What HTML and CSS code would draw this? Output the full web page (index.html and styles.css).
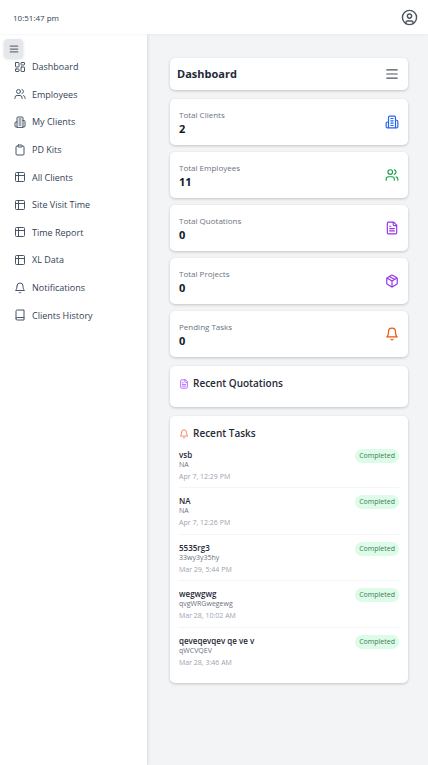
FILE: index.html
```html
<!DOCTYPE html>
<html lang="en">
<head>
<meta charset="utf-8">
<meta name="viewport" content="width=device-width, initial-scale=1">
<title>Dashboard</title>
<link rel="stylesheet" href="styles.css">
</head>
<body>
<svg class="sprite" aria-hidden="true">
  <symbol id="grid" viewBox="0 0 24 24"><rect x="3" y="3" width="7" height="9" rx="1"/><rect x="14" y="3" width="7" height="5" rx="1"/><rect x="14" y="12" width="7" height="9" rx="1"/><rect x="3" y="16" width="7" height="5" rx="1"/></symbol>
  <symbol id="users" viewBox="0 0 24 24"><path d="M16 21v-2a4 4 0 0 0-4-4H6a4 4 0 0 0-4 4v2"/><circle cx="9" cy="7" r="4"/><path d="M22 21v-2a4 4 0 0 0-3-3.87M16 3.13a4 4 0 0 1 0 7.75"/></symbol>
  <symbol id="building" viewBox="0 0 24 24"><path d="M6 22V4a2 2 0 0 1 2-2h8a2 2 0 0 1 2 2v18ZM6 12H4a2 2 0 0 0-2 2v6a2 2 0 0 0 2 2h2M18 9h2a2 2 0 0 1 2 2v9a2 2 0 0 1-2 2h-2M10 6h4M10 10h4M10 14h4M10 18h4"/></symbol>
  <symbol id="clipboard" viewBox="0 0 24 24"><rect x="8" y="2" width="8" height="4" rx="1"/><path d="M16 4h2a2 2 0 0 1 2 2v14a2 2 0 0 1-2 2H6a2 2 0 0 1-2-2V6a2 2 0 0 1 2-2h2"/></symbol>
  <symbol id="table" viewBox="0 0 24 24"><path d="M9 3H5a2 2 0 0 0-2 2v4m6-6h10a2 2 0 0 1 2 2v4M9 3v18m0 0h10a2 2 0 0 0 2-2V9M9 21H5a2 2 0 0 1-2-2V9m0 0h18"/></symbol>
  <symbol id="bell" viewBox="0 0 24 24"><path d="M6 8a6 6 0 0 1 12 0c0 7 3 9 3 9H3s3-2 3-9M10.3 21a1.94 1.94 0 0 0 3.4 0"/></symbol>
  <symbol id="book" viewBox="0 0 24 24"><path d="M4 19.5v-15A2.5 2.5 0 0 1 6.500 2H20v20H6.500a2.500 2.500 0 0 1 0-5H20"/></symbol>
  <symbol id="file" viewBox="0 0 24 24"><path d="M15 2H6a2 2 0 0 0-2 2v16a2 2 0 0 0 2 2h12a2 2 0 0 0 2-2V7ZM14 2v4a2 2 0 0 0 2 2h4M10 9H8M16 13H8M16 17H8"/></symbol>
  <symbol id="box" viewBox="0 0 24 24"><path d="M21 8a2 2 0 0 0-1-1.730l-7-4a2 2 0 0 0-2 0l-7 4A2 2 0 0 0 3 8v8a2 2 0 0 0 1 1.730l7 4a2 2 0 0 0 2 0l7-4A2 2 0 0 0 21 16ZM3.300 7l8.700 5 8.700-5M12 22V12M7.500 4.270l9 5.150"/></symbol>
  <symbol id="menu" viewBox="0 0 24 24"><path d="M3 5h18M3 12h18M3 19h18"/></symbol>
  <symbol id="user" viewBox="0 0 24 24"><circle cx="12" cy="12" r="10"/><circle cx="12" cy="10" r="3"/><path d="M7 20.700V19a2 2 0 0 1 2-2h6a2 2 0 0 1 2 2v1.700"/></symbol>
</svg>

<header class="topbar">
  <time class="clock">10:51:47 pm</time>
  <button class="plain" type="button" aria-label="Account"><svg class="icon icon-profile"><use href="#user"/></svg></button>
</header>

<div class="shell">
  <aside class="sidebar">
    <button class="toggle" type="button" aria-label="Toggle sidebar"><svg class="icon icon-toggle"><use href="#menu"/></svg></button>
    <nav class="nav">
      <a href="#"><svg class="icon"><use href="#grid"/></svg>Dashboard</a>
      <a href="#"><svg class="icon"><use href="#users"/></svg>Employees</a>
      <a href="#"><svg class="icon"><use href="#building"/></svg>My Clients</a>
      <a href="#"><svg class="icon"><use href="#clipboard"/></svg>PD Kits</a>
      <a href="#"><svg class="icon"><use href="#table"/></svg>All Clients</a>
      <a href="#"><svg class="icon"><use href="#table"/></svg>Site Visit Time</a>
      <a href="#"><svg class="icon"><use href="#table"/></svg>Time Report</a>
      <a href="#"><svg class="icon"><use href="#table"/></svg>XL Data</a>
      <a href="#"><svg class="icon"><use href="#bell"/></svg>Notifications</a>
      <a href="#"><svg class="icon"><use href="#book"/></svg>Clients History</a>
    </nav>
  </aside>

  <main class="content">
    <div class="card page-head">
      <h1>Dashboard</h1>
      <button class="plain" type="button" aria-label="Menu"><svg class="icon icon-menu"><use href="#menu"/></svg></button>
    </div>

    <section class="stats">
      <div class="card stat"><div><p class="label">Total Clients</p><p class="value">2</p></div><svg class="icon icon-stat blue"><use href="#building"/></svg></div>
      <div class="card stat"><div><p class="label">Total Employees</p><p class="value">11</p></div><svg class="icon icon-stat green"><use href="#users"/></svg></div>
      <div class="card stat"><div><p class="label">Total Quotations</p><p class="value">0</p></div><svg class="icon icon-stat purple"><use href="#file"/></svg></div>
      <div class="card stat"><div><p class="label">Total Projects</p><p class="value">0</p></div><svg class="icon icon-stat purple"><use href="#box"/></svg></div>
      <div class="card stat"><div><p class="label">Pending Tasks</p><p class="value">0</p></div><svg class="icon icon-stat orange"><use href="#bell"/></svg></div>
    </section>

    <section class="card panel">
      <h2><svg class="icon icon-small purple-soft"><use href="#file"/></svg>Recent Quotations</h2>
      <ul class="quotations"></ul>
    </section>

    <section class="card panel">
      <h2><svg class="icon icon-small orange-soft"><use href="#bell"/></svg>Recent Tasks</h2>
      <ul class="tasks">
        <li><div><h3>vsb</h3><p class="note">NA</p><p class="date">Apr 7, 12:29 PM</p></div><span class="badge">Completed</span></li>
        <li><div><h3>NA</h3><p class="note">NA</p><p class="date">Apr 7, 12:26 PM</p></div><span class="badge">Completed</span></li>
        <li><div><h3>5535rg3</h3><p class="note">33wy3y35hy</p><p class="date">Mar 29, 5:44 PM</p></div><span class="badge">Completed</span></li>
        <li><div><h3>wegwgwg</h3><p class="note">qvgWRGwegewg</p><p class="date">Mar 28, 10:02 AM</p></div><span class="badge">Completed</span></li>
        <li><div><h3>qeveqevqev qe ve v</h3><p class="note">qWCVQEV</p><p class="date">Mar 28, 3:46 AM</p></div><span class="badge">Completed</span></li>
      </ul>
    </section>
  </main>
</div>
</body>
</html>
```
FILE: styles.css
```css
* { box-sizing: border-box; margin: 0; padding: 0; }

body {
  min-height: 100vh;
  display: flex;
  flex-direction: column;
  background: #f3f4f6;
  color: #1f2937;
  font-family: "Open Sans", "Noto Sans", sans-serif;
  font-size: 9px;
}

ul { list-style: none; }
a { color: inherit; text-decoration: none; }
.sprite { display: none; }

.icon {
  display: block;
  flex: none;
  width: 12px;
  height: 12px;
  fill: none;
  stroke: currentColor;
  stroke-width: 2;
  stroke-linecap: round;
  stroke-linejoin: round;
}
.icon-profile { width: 17px; height: 17px; }
.icon-toggle { width: 10px; height: 10px; stroke-width: 3; }
.icon-menu { width: 14px; height: 14px; }
.icon-stat { width: 14px; height: 14px; }
.icon-small { width: 10px; height: 10px; }

.blue { color: #2563eb; }
.green { color: #16a34a; }
.purple { color: #9333ea; }
.orange { color: #ea580c; }
.purple-soft { color: #a855f7; }
.orange-soft { color: #f97345; }

.plain { border: 0; background: none; color: #4b5563; cursor: pointer; }

.topbar {
  position: relative;
  display: flex;
  align-items: center;
  justify-content: space-between;
  height: 34px;
  padding: 0 10px 0 13px;
  background: #fff;
  box-shadow: 0 1px 2px rgba(0, 0, 0, 0.04);
}
.clock { padding-top: 2px; color: #334155; font-size: 8px; line-height: 12px; font-weight: 500; }

.shell { flex: 1; display: flex; }

.sidebar {
  flex: none;
  width: 147px;
  background: #fff;
  box-shadow: 1px 0 3px rgba(0, 0, 0, 0.1);
}
.toggle {
  display: flex;
  align-items: center;
  justify-content: center;
  width: 19px;
  height: 19px;
  margin: 5px 0 0 4px;
  border: 0;
  border-radius: 4px;
  background: #e5e7eb;
  color: #6b7280;
  box-shadow: 0 1px 3px rgba(0, 0, 0, 0.15);
  cursor: pointer;
}
.nav {
  display: grid;
  grid-auto-rows: 1fr;
  min-height: 276px;
  margin-top: -5px;
  padding: 0 14px;
  color: #334155;
  font-size: 9px;
}
.nav a { display: flex; align-items: center; gap: 6px; }
.nav .icon { color: #475569; }

.content { flex: 1; min-width: 0; padding: 24px 20px 24px 23px; }

.card {
  border-radius: 5px;
  background: #fff;
  box-shadow: 0 1px 3px rgba(0, 0, 0, 0.2);
}

.page-head {
  display: flex;
  align-items: center;
  justify-content: space-between;
  height: 32px;
  margin-bottom: 9px;
  padding: 0 9px 0 7px;
}
.page-head h1 { font-size: 11px; line-height: 16px; font-weight: 700; }

.stats { display: grid; gap: 7px; margin-bottom: 9px; }
.stat {
  display: flex;
  align-items: center;
  justify-content: space-between;
  height: 46px;
  padding: 0 9px;
}
.label { color: #6b7280; font-size: 8px; line-height: 13px; }
.value { color: #111827; font-size: 11px; line-height: 15px; font-weight: 700; }

.panel { padding: 9px; margin-bottom: 9px; }
.panel h2 {
  display: flex;
  align-items: center;
  gap: 4px;
  font-size: 10px;
  line-height: 17px;
  font-weight: 600;
}
.quotations { min-height: 6px; }

.tasks { display: grid; grid-auto-rows: 1fr; min-height: 232px; }
.tasks li {
  display: flex;
  align-items: flex-start;
  justify-content: space-between;
  padding-top: 7px;
  border-bottom: 1px solid #f3f4f6;
}
.tasks li:last-child { border-bottom: 0; }
.tasks h3 { font-size: 8px; line-height: 11px; font-weight: 600; }
.note { color: #6b7280; font-size: 7px; line-height: 9px; }
.date { margin-top: 2px; color: #9ca3af; font-size: 7px; line-height: 11px; }
.badge {
  padding: 2px 4px;
  border-radius: 7px;
  background: #dcfce7;
  color: #3f7a5c;
  font-size: 7px;
  line-height: 10px;
}
```
